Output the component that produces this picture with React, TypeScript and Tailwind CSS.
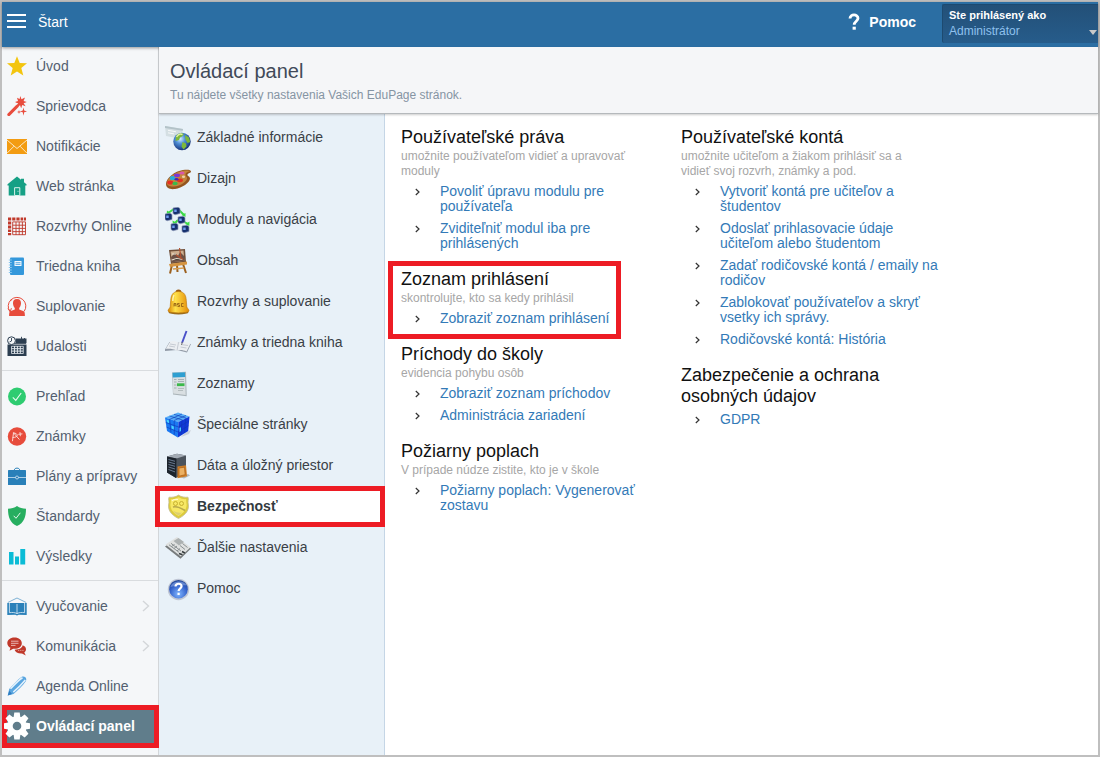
import type { ReactNode } from "react";

type Item = { label: string; icon: ReactNode; more?: boolean; active?: boolean };

function Side({ children }: { children: ReactNode }) {
  return (
    <svg viewBox="0 0 20 20" className="h-5 w-5 shrink-0" aria-hidden="true">
      {children}
    </svg>
  );
}

function Pic({ children }: { children: ReactNode }) {
  return (
    <svg viewBox="0 0 26 26" className="h-[26px] w-[26px] shrink-0" aria-hidden="true">
      {children}
    </svg>
  );
}

const groups: Item[][] = [
  [
    {
      label: "Úvod",
      icon: (
        <Side>
          <path d="M10 .2l2.700 6.700 7.300.4-5.700 4.700 2 7.500-6.300-4.100-6.300 4.100 2-7.500L0 7.300l7.300-.4z" fill="#f3c50f" />
        </Side>
      ),
    },
    {
      label: "Sprievodca",
      icon: (
        <Side>
          <g fill="#e84c3d">
            <path d="M13.300 0l1.200 3.200L18 1.600l-1.400 3.300 3.200 1-3.200 1.300 2 3-3.400-1.200-1 3.300-1.400-3.100-3.400 1.500 1.500-3.300L8 6l3-1.100-1-3.200 2.600 1.400z" />
            <path d="M16.500 11.500l.7 3 2.800.9-2.800.9-.7 3.400-.8-3.400-2.700-.9 2.700-.9zM12 14l.5 1.500 1.500.5-1.500.5L12 18l-.5-1.500L10 16l1.500-.5z" />
          </g>
          <path d="M2 18.500l10-10" stroke="#f5f7f9" strokeWidth="4.500" />
          <path d="M1.800 18.600L10 10.400" stroke="#e84c3d" strokeWidth="3" strokeLinecap="round" />
          <path d="M10.500 9.900l2.200-2.200" stroke="#e84c3d" strokeWidth="2.600" />
        </Side>
      ),
    },
    {
      label: "Notifikácie",
      icon: (
        <Side>
          <path d="M0 3h20v15H0z" fill="#f39c12" />
          <path d="M0 4l10 8.500L20 4M0 17.200l7-7M20 17.200l-7-7" fill="none" stroke="#fdf0d8" strokeWidth=".9" />
        </Side>
      ),
    },
    {
      label: "Web stránka",
      icon: (
        <Side>
          <path d="M10 .6L.5 8.300v1.200h1.200V19.500h16.600V9.500h1.200V8.300L17 6.200V2.800h-3v1z" fill="#16a085" />
          <path d="M7.600 19.500v-7.800h5.200v7.800z" fill="#16a085" stroke="#d9f1eb" strokeWidth="1" />
          <path d="M11 14.800v1" stroke="#d9f1eb" strokeWidth=".9" />
        </Side>
      ),
    },
    {
      label: "Rozvrhy Online",
      icon: (
        <Side>
          <path
            d="M1 1.500h3.200v3H1zM5.200 1.500h3.200v3H5.200zM9.400 1.500h3.200v3H9.400zM13.600 1.500h2.600v3h-2.600zM17 1.500h2v3h-2zM1 5.500h3.200v3H1zM1 9.500h3.200v3H1zM1 13.500h3.200v2.500H1zM1 17h3.200v2.200H1z"
            fill="#c0392b"
          />
          <path
            d="M5.700 5.900h12.800v12.800H5.700zM9 6v13M12.200 6v13M15.400 6v13M5.700 9.200h13M5.700 12.400h13M5.700 15.600h13"
            fill="none"
            stroke="#c0392b"
            strokeWidth=".9"
          />
        </Side>
      ),
    },
    {
      label: "Triedna kniha",
      icon: (
        <Side>
          <rect x="3" y="1.500" width="14" height="17.500" rx="1" fill="#3498db" />
          <path d="M1.800 4h3M1.800 6.500h3M1.800 9h3M1.800 11.500h3M1.800 14h3M1.800 16.500h3" stroke="#8ac8ef" strokeWidth="1" />
          <path d="M7.500 5h7v5h-7z" fill="#f2f8fd" />
          <path d="M8.500 6.700h5M8.500 8.400h5" stroke="#3498db" strokeWidth=".8" />
        </Side>
      ),
    },
    {
      label: "Suplovanie",
      icon: (
        <Side>
          <path
            d="M3 15.500A8.800 8.800 0 1 1 17.200 15.300M1 12.500l2.200 3.300 1.200-3.600M4.500 3L3.700 5"
            fill="none"
            stroke="#e74c3c"
            strokeWidth="1"
          />
          <path
            d="M10 3c3 0 4.200 2 4 4.500-.2 2.300-1 3.700-1.800 4.500v1.500l4.500 1.800c1 .5 1.200 2 1.200 4.700H2.100c0-2.700.2-4.200 1.200-4.700l4.500-1.800V12C6.900 11.200 6.200 9.800 6 7.500 5.800 5 7 3 10 3z"
            fill="#e74c3c"
          />
        </Side>
      ),
    },
    {
      label: "Udalosti",
      icon: (
        <Side>
          <path d="M.5 8.500h19V20H.5zM8.500 2.500h11v4.800h-11z" fill="#2c3e50" />
          <path d="M2 7.500h17" stroke="#2c3e50" strokeWidth=".8" />
          <circle cx="4.500" cy="4.700" r="3.900" fill="#f5f7f9" stroke="#2c3e50" strokeWidth="1" />
          <path d="M4.500 2v3l-2 1M14.500.8v3.500M17.500 2v2" fill="none" stroke="#2c3e50" strokeWidth=".9" />
          <path d="M4.500 10.300h11.800v7.200H4.500z" fill="none" stroke="#dfe5ea" strokeWidth=".8" />
          <path d="M4.500 12.700h11.500M4.500 15.100h11.500M7.500 10v7.500M10.400 10v7.500M13.300 10v7.500" stroke="#dfe5ea" strokeWidth="1" />
        </Side>
      ),
    },
  ],
  [
    {
      label: "Prehľad",
      icon: (
        <Side>
          <circle cx="10" cy="10.500" r="9" fill="#2ecc71" />
          <path d="M5.800 11.300l3 3 5.400-7.300" fill="none" stroke="#eafbf1" strokeWidth="1.100" />
        </Side>
      ),
    },
    {
      label: "Známky",
      icon: (
        <Side>
          <circle cx="10" cy="10.500" r="9.200" fill="#e74c3c" />
          <path
            d="M5.500 14.800l1-8 5.700 6.500M6 11.500c5.500 0 6-4 .5-4.700M13 6.500l.3 3.300M11.700 8.300l3.300-.4"
            fill="none"
            stroke="#fbe2df"
            strokeWidth=".9"
            strokeLinecap="round"
          />
        </Side>
      ),
    },
    {
      label: "Plány a prípravy",
      icon: (
        <Side>
          <rect x="1" y="4" width="18" height="15" rx=".6" fill="#2980b9" />
          <path d="M7.300 4C7.500 1.500 12.500 1.500 12.700 4" fill="none" stroke="#2980b9" strokeWidth="1" />
          <path d="M1 11.500h7.700M11.300 11.500H19" stroke="#cfe3f1" strokeWidth=".8" />
          <circle cx="10" cy="11.500" r="1.500" fill="none" stroke="#cfe3f1" strokeWidth=".8" />
        </Side>
      ),
    },
    {
      label: "Štandardy",
      icon: (
        <Side>
          <path d="M10 0c2.500 2 5.700 2.600 9 2.800C19 11 17 17 10 20 3 17 1 11 1 2.800 4.300 2.600 7.500 2 10 0z" fill="#27ae60" />
          <path d="M6.700 9.800l2.300 2.500 4.300-5.500" fill="none" stroke="#e4f6eb" strokeWidth="1" />
        </Side>
      ),
    },
    {
      label: "Výsledky",
      icon: (
        <Side>
          <path d="M2 6h4.500v12.500H2zM8 10.500h4v8H8zM13.300 3h4.900v15.500h-4.900z" fill="#0bbcd6" />
        </Side>
      ),
    },
  ],
  [
    {
      label: "Vyučovanie",
      more: true,
      icon: (
        <Side>
          <path d="M.8 6.500L10 2l9.200 4.500" fill="none" stroke="#5f9fcc" strokeWidth=".8" />
          <path d="M.3 7h19.400v12l-8-.3-1.700.8-1.700-.8-8 .3z" fill="#2980b9" />
          <path d="M2.400 7v9.700c2.800-.5 5.400-.3 7.600.9 2.200-1.200 4.800-1.400 7.600-.9V7M10 8v9.500" fill="none" stroke="#e3eff7" strokeWidth=".8" />
        </Side>
      ),
    },
    {
      label: "Komunikácia",
      more: true,
      icon: (
        <Side>
          <path
            d="M7.500 1.500c4.500 0 7.300 2.500 7.300 5.700s-2.800 5.600-7.300 5.600l-1.300-.1-3.700 2 .9-3C1.400 10.700.3 9 .3 7.200c0-3.200 2.700-5.700 7.200-5.700z"
            fill="#c0392b"
          />
          <path d="M4 5.200h7.500M4 7.300h7.500M4 9.400h4.500" stroke="#f3d6d3" strokeWidth=".8" />
          <path
            d="M15.600 9.300c2.200.7 3.400 2.200 3.400 3.900 0 1.300-.6 2.400-1.700 3.200l1.500 3-3.800-1.800c-4.200.2-6.700-1.300-7.400-3.800 4.600-.2 7.700-1.800 8-4.500z"
            fill="#c0392b"
          />
          <path d="M11.300 14.400h.9m1.200 0h.9m1.200 0h.9" stroke="#f3d6d3" strokeWidth=".9" />
        </Side>
      ),
    },
    {
      label: "Agenda Online",
      icon: (
        <Side>
          <path
            d="M.7 19.500l1.500-6.500C6 9 10.500 3.500 14.500 1c3-1.500 6 1.200 4.300 4.300C16 9.500 11 14.500 6.500 18z"
            fill="#5aa6e0"
          />
          <path
            d="M3.500 12.800C7.500 8.500 11.500 4.200 15.500 1.800M6.300 16.200c4.200-3.500 8.200-7.700 12-12.200"
            stroke="#e2f1fc"
            strokeWidth="1.600"
            fill="none"
          />
          <path d="M.7 19.500l4.300-1.500-2.600-3.200z" fill="#2f7dc0" />
        </Side>
      ),
    },
    {
      label: "Ovládací panel",
      active: true,
      icon: (
        <svg viewBox="0 0 26 28" className="relative z-20 -mx-[3px] h-7 w-[26px] shrink-0" aria-hidden="true">
          <g fill="#fff">
            <circle cx="13" cy="14" r="9.700" />
            <path d="M10.300.5h5.400l.7 5h-6.800zM10.300 27.500h5.400l.7-5h-6.800z" />
            <path d="M10.300.5h5.400l.7 5h-6.800zM10.300 27.500h5.400l.7-5h-6.800z" transform="rotate(45 13 14)" />
            <path d="M10.300.5h5.400l.7 5h-6.800zM10.300 27.500h5.400l.7-5h-6.800z" transform="rotate(90 13 14)" />
            <path d="M10.300.5h5.400l.7 5h-6.800zM10.300 27.500h5.400l.7-5h-6.800z" transform="rotate(135 13 14)" />
          </g>
          <circle cx="13" cy="14" r="4.300" fill="#607d8b" />
        </svg>
      ),
    },
  ],
];

function Screen({ x, y }: { x: number; y: number }) {
  return (
    <g>
      <path d={`M${x} ${y}l5-.8 2 1.300v5l-5 1.300-2-1.300z`} fill="#15306f" stroke="#8b96b5" strokeWidth=".7" />
      <path d={`M${x + 1.2} ${y + 1.5}h2.500v2.500h-2.500z`} fill="#6f9cf0" />
    </g>
  );
}

const settings: Item[] = [
  {
    label: "Základné informácie",
    icon: (
      <Pic>
        <defs>
          <radialGradient id="globe" cx=".4" cy=".35" r=".7">
            <stop offset="0" stopColor="#d7f0ff" />
            <stop offset=".4" stopColor="#4e8ed5" />
            <stop offset="1" stopColor="#122a72" />
          </radialGradient>
        </defs>
        <path d="M0 1l18 3-2 10L1 11z" fill="#d4dfe3" />
        <path d="M0 1l18 3-.3 1.800L0 3z" fill="#b3c2c8" />
        <path d="M3 5.300l8 1.500M3 7.800l6 1.100" stroke="#f6f9fa" strokeWidth="1" />
        <circle cx="17" cy="16.500" r="8.700" fill="url(#globe)" />
        <path
          d="M11 11c2-3 6-3.500 8-2l-2 2.500-2 1-1 2.500-3.500 1zM20 10l4 2.500 1.200 4.500-2.700 1-2-3.500zM17.500 17l3.500 1.500.5 3-3 3-2-3z"
          fill="#7db83a"
        />
        <path d="M11.500 12c1.500-2.500 4-3.500 6-2.500" stroke="#dff1a0" strokeWidth="1.400" fill="none" />
      </Pic>
    ),
  },
  {
    label: "Dizajn",
    icon: (
      <Pic>
        <path d="M1 18C1 12 10 5 18 4c4-.5 8-.5 8 1.500 0 1.500-3 1.700-3.500 3-.7 1.500 2.500 1.500 2.500 4 0 4-8 9.500-15 10.500-5 .7-9-1-9-5z" fill="#94551f" />
        <path
          d="M2 16.500C3 11.500 10.500 6 18 4.800c3.500-.5 6.500-.5 7 .5-3.500 1-4.700 2-4.500 3.700.2 1.500 2 2 1.500 3.700-1.200 3.800-7.500 7.500-13 7.800-4 .2-7.500-1-7-4z"
          fill="#c4843c"
        />
        <ellipse cx="7.500" cy="12" rx="2.800" ry="2" fill="#25aadb" />
        <ellipse cx="12" cy="9.300" rx="3" ry="1.900" fill="#7b35d4" />
        <ellipse cx="17" cy="6.900" rx="2.600" ry="1.500" fill="#d957ac" />
        <ellipse cx="5.200" cy="16.500" rx="3" ry="2" fill="#e62e21" />
        <ellipse cx="10" cy="17.500" rx="2.700" ry="1.800" fill="#3abb4b" />
        <ellipse cx="15" cy="14.300" rx="3" ry="1.900" fill="#e2321f" />
        <ellipse cx="11.500" cy="13.200" rx="2" ry="1.300" fill="#4527b4" />
        <ellipse cx="18.500" cy="10.700" rx="1.600" ry="1.200" fill="#eed1a5" />
      </Pic>
    ),
  },
  {
    label: "Moduly a navigácia",
    icon: (
      <Pic>
        <path d="M9 2L3 6M14 3l5 5M16 13l7 4M13 13l-3 3" stroke="#3bdc45" strokeWidth="2" />
        <path
          d="M2 3.500L1.500 8l4-2zM20.500 6l0 4-4-2zM24.500 14.500l-.2 4.500-4-2zM7.500 13.500L8 18l4-2z"
          fill="#3bdc45"
        />
        <Screen x={8} y={1} />
        <Screen x={0} y={7} />
        <Screen x={13} y={10} />
        <Screen x={6} y={17} />
        <Screen x={17} y={19} />
      </Pic>
    ),
  },
  {
    label: "Obsah",
    icon: (
      <Pic>
        <path d="M7 17L5 25.500M18 16l3 9M12 17l.5 7" stroke="#9c611f" strokeWidth="2" />
        <path d="M4 2l16-1 1 13-15 2z" fill="#70503a" />
        <path d="M5.500 3.500l13-1 .8 10.300-12.300 1.500z" fill="#cdae8e" />
        <path d="M6 9l4-4 3 3 2-4 4 4 .4 4.800L7 14.300z" fill="#6c5247" />
        <path d="M7 6h4M6.700 12l5-1.500 6 1" stroke="#ece3d0" strokeWidth="1.200" />
        <path d="M14.500 0l1.500 10M11 7l7 4.500" stroke="#b5502d" strokeWidth="1.100" />
        <path d="M4 16l18-2.500v3L5 19z" fill="#d4933f" />
        <path d="M8 21l11-1" stroke="#d59c4e" strokeWidth="1.500" />
      </Pic>
    ),
  },
  {
    label: "Rozvrhy a suplovanie",
    icon: (
      <Pic>
        <defs>
          <linearGradient id="bell" x2="1">
            <stop offset="0" stopColor="#d98400" />
            <stop offset=".35" stopColor="#ffe14a" />
            <stop offset="1" stopColor="#e28a05" />
          </linearGradient>
        </defs>
        <ellipse cx="13.500" cy="23.200" rx="10" ry="2.300" fill="#9a6b1c" />
        <circle cx="13.500" cy="3.500" r="3" fill="#9c5c15" />
        <path
          d="M13.500 2.500c6 0 7.500 4 7.800 9l.5 6c.3 2 2.200 2.500 2.200 4.500 0 2.500-21 2.500-21 0 0-2 1.900-2.500 2.200-4.500l.5-6c.3-5 1.800-9 7.800-9z"
          fill="url(#bell)"
          stroke="#bb7607"
          strokeWidth=".6"
        />
        <path
          d="M9 14.500v3m0-3h2v3m-2-1.500h2m3.500-1.500h-2v1.500h2v1.500h-2m6-3h-2v3h2"
          fill="none"
          stroke="#8b5710"
          strokeWidth=".8"
        />
        <path d="M9 6c-1 2-1.200 4-1.200 6" stroke="#fff5b5" strokeWidth="1.400" fill="none" />
      </Pic>
    ),
  },
  {
    label: "Známky a triedna kniha",
    icon: (
      <Pic>
        <path d="M0 19.500l4.500-7.500 9 .5L26 14l-4 8.500-10-2.500L0 21z" fill="#929ba7" />
        <path
          d="M.8 18.800l4.500-7.300c3-1 6-.5 8.200 1C17 11 21.500 11.500 25.500 13.500l-4 8c-3-1.500-7-2-9.500-.8-3.500-2-7.500-2.200-11.200-1.900z"
          fill="#eceff2"
        />
        <path d="M13.500 12.500L12 20.500M5 14l6 1M4 16l6 1M16 14.500l7 1M15.500 17l6 1" stroke="#b4bac4" strokeWidth=".7" />
        <path d="M21.500 1L17 13" stroke="#4950c8" strokeWidth="1.900" />
        <path d="M17.300 12l-.8 3" stroke="#777" strokeWidth="1" />
      </Pic>
    ),
  },
  {
    label: "Zoznamy",
    icon: (
      <Pic>
        <path d="M7 1.500l14-.8.700 24.500L8 23.500z" fill="#a9b3b8" />
        <path d="M7.500 1.800l12.500-.6.7 22.800-12.500-1.500z" fill="#d9dfe2" />
        <path d="M7.500 1.800l12.500-.6.2 4.800-12.500.6z" fill="#2e9fd1" />
        <path d="M9 8.500h2.500M9 11h2.500M9 14h2.500M9 17h2.500M13 8.500h6M13 10.500h6" stroke="#99a4aa" strokeWidth=".8" />
        <path d="M12 12.300h7.500v2.800H12z" fill="#3bb94b" />
        <path d="M13 17.500h6M13 19.500h5" stroke="#aab2b5" strokeWidth=".8" />
      </Pic>
    ),
  },
  {
    label: "Špeciálne stránky",
    icon: (
      <Pic>
        <path d="M20 21l6-3-2 4-8 3z" fill="#c9d0d8" />
        <path d="M0 5.500L13 .5l11.500 4L13.500 10z" fill="#58aef8" />
        <path d="M0 5.500L13.500 10l-.7 15.500L2 19z" fill="#1b79f2" />
        <path d="M13.500 10l11-5.500L23.200 19l-10.400 6.500z" fill="#1039d8" />
        <path
          d="M4.500 4L17.500 8M9 2.300l12 3.800M4.500 7.500L17 2M9 8.500l12-5M4.700 7.500l1.300 13M9.200 8.800l.1 14M.8 10.500l12.700 4.500 10.500-6M1.500 15l11.500 5 10.500-6.300M17 8.300L16 23M20.700 6.500L19.500 21"
          fill="none"
          stroke="#0c35b5"
          strokeWidth=".6"
        />
        <path
          d="M1.500 7.500L4 8.500v2.700L2 10zM14.500 16l1.500-.8-.1 3.800-1.400.9zM6.500 13.500l2.300.9v3l-2.200-1z"
          fill="#48d6ff"
        />
      </Pic>
    ),
  },
  {
    label: "Dáta a úložný priestor",
    icon: (
      <Pic>
        <path d="M15 24l8-3 2 1.500-6 3z" fill="#aeb6bb" />
        <path d="M2 3.500L12 .8l9 1.700v17L11 25 2 19.500z" fill="#4b535c" />
        <path d="M2 3.500L12 .8l9 1.700-9.500 3z" fill="#a3abb4" />
        <path d="M2 3.500l9.500 2L11 25 2 19.500z" fill="#1c242d" />
        <path
          d="M3.500 6.500l6.500 1.800M3.500 9l6.500 1.800M3.500 11.500l6.500 1.800M3.500 14l6.500 2M3.500 16.500l6.500 2.400"
          stroke="#68798f"
          strokeWidth="1"
        />
        <path d="M12.500 13.500l8.500-1.300 1 11-9.500 2z" fill="#cf7d25" />
        <path d="M14 15l5.500-.8.7 7.500-6.200 1.500z" fill="#ecb163" stroke="#a95e16" strokeWidth=".7" />
      </Pic>
    ),
  },
  {
    label: "Bezpečnosť",
    active: true,
    icon: (
      <Pic>
        <path
          d="M13.500 1c2.500 2 6.500 2.500 9.500 2.200 1 2.500-.5 4 .3 6.800 1.200 5.500-2.300 11-9.800 14.500C6 21 2.500 15.500 3.700 10c.8-2.800-.7-4.300.3-6.800 3 .3 7-.2 9.500-2.200z"
          fill="#dccb3c"
          stroke="#c5bf9b"
          strokeWidth=".8"
        />
        <path
          d="M13.500 3.300c2.500 1.500 5 2 7.800 1.800-.3 2 .1 3.500.3 5.500.4 4-2.600 8.200-8.100 11.300C8 18.800 5 14.600 5.400 10.600c.2-2 .6-3.500.3-5.500 2.800.2 5.300-.3 7.800-1.800z"
          fill="#f7e866"
        />
        <circle cx="10.500" cy="9.500" r="2" fill="none" stroke="#c2aa2b" strokeWidth=".9" />
        <circle cx="16.500" cy="9.500" r="2" fill="none" stroke="#c2aa2b" strokeWidth=".9" />
        <path d="M8 13c4-1 8 1 12 3.500" fill="none" stroke="#b9a94c" strokeWidth="1.500" />
        <path d="M8 16.500c3 2 6 2.500 9 2-1 1.200-2 2-3.500 3-2.500-1.300-4.300-3-5.500-5z" fill="#ddcf72" />
        <path d="M7 7c1-1.500 3-2 6-1.500" stroke="#fffbd0" strokeWidth="1.200" fill="none" />
      </Pic>
    ),
  },
  {
    label: "Ďalšie nastavenia",
    icon: (
      <Pic>
        <path d="M0 11.500L12 3l14 10.500-10.500 10.300z" fill="#777b7c" />
        <path d="M.5 9.500L12 2l13.500 10.200-9.700 9.300z" fill="#dfe1e0" />
        <path d="M8.500 6l5-3 5.500 4-5 3.600z" fill="#acb1b1" />
        <path
          d="M4 9.800l10 7.500M6 8.300l10 7.800M9 13.500l3-2.500M6.500 11.500l3-2M12 16l3-2.500M15 10.500l5 4M17.500 8.500l5 4"
          stroke="#81888a"
          strokeWidth=".9"
        />
        <path d="M14 18.500l3.500 1.300M17 16.500l2.800 1.500" stroke="#343a3c" strokeWidth="1.500" />
      </Pic>
    ),
  },
  {
    label: "Pomoc",
    icon: (
      <Pic>
        <defs>
          <radialGradient id="help" cx=".5" cy=".75" r=".75">
            <stop offset="0" stopColor="#80b5ff" />
            <stop offset=".65" stopColor="#315fc8" />
            <stop offset="1" stopColor="#244792" />
          </radialGradient>
        </defs>
        <circle cx="13.500" cy="13.500" r="10.700" fill="#bfc6d4" />
        <circle cx="13.500" cy="13.200" r="9.300" fill="url(#help)" />
        <path d="M5.500 11c1-6 13-8 16.200-1.500-5-.7-11 0-16.200 1.500z" fill="#8aa8e3" opacity=".6" />
        <path d="M10.500 10.500c.3-3.800 6.500-3.500 6 0-.3 2-2.700 2.200-2.900 4.500m0 1.800v2.200" fill="none" stroke="#fff" strokeWidth="2.200" />
      </Pic>
    ),
  },
];

type Section = { title: string; note?: string; links: string[]; marked?: boolean };

const columns: Section[][] = [
  [
    {
      title: "Používateľské práva",
      note: "umožnite používateľom vidieť a upravovať moduly",
      links: ["Povoliť úpravu modulu pre používateľa", "Zviditeľniť modul iba pre prihlásených"],
    },
    {
      title: "Zoznam prihlásení",
      note: "skontrolujte, kto sa kedy prihlásil",
      links: ["Zobraziť zoznam prihlásení"],
      marked: true,
    },
    {
      title: "Príchody do školy",
      note: "evidencia pohybu osôb",
      links: ["Zobraziť zoznam príchodov", "Administrácia zariadení"],
    },
    {
      title: "Požiarny poplach",
      note: "V prípade núdze zistite, kto je v škole",
      links: ["Požiarny poplach: Vygenerovať zostavu"],
    },
  ],
  [
    {
      title: "Používateľské kontá",
      note: "umožnite učiteľom a žiakom prihlásiť sa a vidieť svoj rozvrh, známky a pod.",
      links: [
        "Vytvoriť kontá pre učiteľov a študentov",
        "Odoslať prihlasovacie údaje učiteľom alebo študentom",
        "Zadať rodičovské kontá / emaily na rodičov",
        "Zablokovať používateľov a skryť vsetky ich správy.",
        "Rodičovské kontá: História",
      ],
    },
    { title: "Zabezpečenie a ochrana osobných údajov", links: ["GDPR"] },
  ],
];

function TopBar() {
  return (
    <header className="relative z-10 flex h-[45px] shrink-0 items-start bg-[#2b6ea3] pt-0.5 text-white shadow-[0_1px_3px_rgba(0,0,0,0.4)]">
      <button type="button" aria-label="Menu" className="ml-[5px] mt-2.5 flex w-[19px] flex-col gap-1">
        <span className="h-[2px] w-full bg-white" />
        <span className="h-[2px] w-full bg-white" />
        <span className="h-[2px] w-full bg-white" />
      </button>
      <span className="ml-3 mt-2 text-[14px] leading-5">Štart</span>
      <a href="#pomoc" className="ml-auto mt-2 flex items-center text-[14px] font-bold leading-5">
        <svg viewBox="0 0 12 18" className="mr-[9px] h-[18px] w-3" aria-hidden="true">
          <path d="M2 5.500C2 .8 10 .8 10 5.300c0 2.900-3.800 3-3.800 6.500" fill="none" stroke="#fff" strokeWidth="2.800" />
          <path d="M4.600 13.700h3.200v3H4.600z" fill="#fff" />
        </svg>
        Pomoc
      </a>
      <button
        type="button"
        className="relative ml-[26px] h-[39px] w-[156px] rounded-l-xs border-l border-t border-[#1d4a70] bg-linear-to-b from-[#235078] to-[#265c8b] pb-0.5 pl-1.5 text-left"
      >
        <span className="block text-[11px] font-bold leading-4">Ste prihlásený ako</span>
        <span className="block text-[12px] leading-4 text-[#8fc1ee]">Administrátor</span>
        <svg viewBox="0 0 8 5" className="absolute bottom-2 right-px h-[5px] w-2" aria-hidden="true">
          <path d="M0 0h8L4 5z" fill="#c9c9c9" />
        </svg>
      </button>
    </header>
  );
}

function Sidebar() {
  return (
    <nav className="w-[157px] shrink-0 border-r border-[#d3d6d9] bg-[#f5f7f9]">
      {groups.map((items, index) => (
        <ul key={index} className={index === 0 ? "" : "mt-[3px] border-t border-[#d9dcdf] pt-1.5"}>
          {items.map((item) => (
            <li key={item.label} className="relative">
              <a
                href="#"
                className={
                  item.active
                    ? "flex h-10 items-center gap-[9px] bg-[#607d8b] pl-[5px] pb-0.5 text-[14px] font-bold text-white"
                    : "flex h-10 items-center gap-[9px] pl-[5px] pb-0.5 text-[14px] text-[#535f70]"
                }
              >
                {item.icon}
                <span className="whitespace-nowrap">{item.label}</span>
                {item.more && (
                  <svg viewBox="0 0 8 12" className="ml-auto mr-2 h-3 w-2" aria-hidden="true">
                    <path d="M1 1l5.500 5L1 11" fill="none" stroke="#d3d6d9" strokeWidth="1.400" />
                  </svg>
                )}
              </a>
              {item.active && (
                <span className="pointer-events-none absolute -right-px -top-0.5 -bottom-px left-0 z-10 border-[5px] border-[#ed1c24]" />
              )}
            </li>
          ))}
        </ul>
      ))}
    </nav>
  );
}

function SettingsList() {
  return (
    <nav className="w-[226px] shrink-0 border-r border-[#c5d6e6] bg-[#e8f1f8] pt-[3px]">
      <ul>
        {settings.map((item) => (
          <li key={item.label} className="relative">
            <a
              href="#"
              className={
                item.active
                  ? "flex h-[41px] items-center gap-1.5 bg-white pl-1.5 text-[14px] font-bold text-[#333a40]"
                  : "flex h-[41px] items-center gap-1.5 pl-1.5 text-[14px] text-[#3a4046]"
              }
            >
              {item.icon}
              <span className="pb-px">{item.label}</span>
            </a>
            {item.active && (
              <span className="pointer-events-none absolute -left-1 -right-px inset-y-0 z-10 border-[5px] border-[#ed1c24]" />
            )}
          </li>
        ))}
      </ul>
    </nav>
  );
}

function SettingsSection({ title, note, links, marked }: Section) {
  return (
    <section className="relative">
      <h2 className="max-w-[245px] text-[18px] leading-[21px] text-[#111]">{title}</h2>
      {note && <p className="mt-px max-w-[245px] text-[12px] leading-[15px] text-[#a6a6a6]">{note}</p>}
      <ul className="mt-[5px] flex flex-col gap-[7px]">
        {links.map((link) => (
          <li key={link} className="flex gap-5 pl-[14px] text-[14px] leading-[15px]">
            <svg viewBox="0 0 5 15" className="h-[15px] w-[5px] shrink-0" aria-hidden="true">
              <path d="M.8 5l3.200 3-3.200 3" fill="none" stroke="#333" strokeWidth="1.200" />
            </svg>
            <a href="#" className="text-[#337ab7]">
              {link}
            </a>
          </li>
        ))}
      </ul>
      {marked && (
        <span className="pointer-events-none absolute -left-[13px] -top-2 -bottom-[13px] w-[233px] border-[5px] border-[#ed1c24]" />
      )}
    </section>
  );
}

export default function App() {
  return (
    <div className="flex min-h-screen flex-col border-2 border-[#bfbfbf] bg-white font-['Liberation_Sans',Arial,sans-serif]">
      <TopBar />
      <div className="flex grow">
        <Sidebar />
        <div className="flex min-w-0 grow flex-col">
          <div className="relative z-10 border-b border-[#b5b9bc] bg-[#f5f6f8] px-[11px] pb-2.5 pt-3 shadow-[0_1px_2px_rgba(0,0,0,0.2)]">
            <h1 className="text-[20px] leading-6 text-[#414a59]">Ovládací panel</h1>
            <p className="mt-1 text-[12px] leading-4 text-[#8594a3]">
              Tu nájdete všetky nastavenia Vašich EduPage stránok.
            </p>
          </div>
          <div className="flex grow">
            <SettingsList />
            <main className="flex grow gap-[18px] pl-4 pt-[13px]">
              {columns.map((sections, index) => (
                <div key={index} className="flex w-[262px] flex-col gap-[18px]">
                  {sections.map((section) => (
                    <SettingsSection key={section.title} {...section} />
                  ))}
                </div>
              ))}
            </main>
          </div>
        </div>
      </div>
    </div>
  );
}
